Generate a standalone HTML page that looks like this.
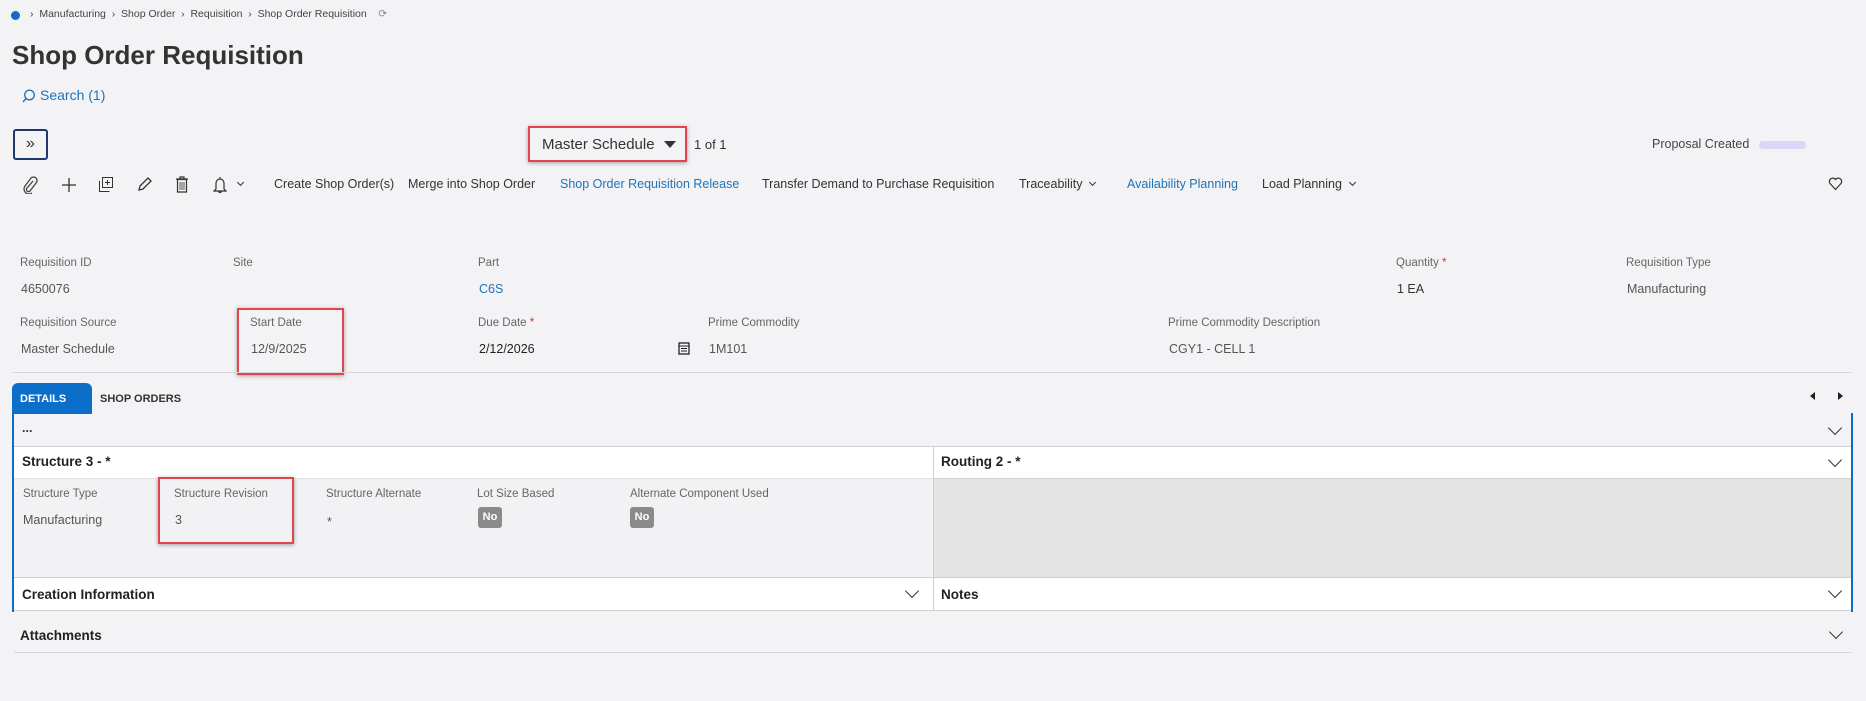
<!DOCTYPE html>
<html><head><meta charset="utf-8"><style>
*{margin:0;padding:0;box-sizing:border-box}
body{width:1866px;height:701px;background:#f3f2f5;font-family:"Liberation Sans",sans-serif;color:#333;position:relative;overflow:hidden;font-size:12.5px}
.a{position:absolute;white-space:nowrap}
.lbl{font-size:11.5px;color:#666}
.val{font-size:12.5px;color:#555}
.blue{color:#1e74b8}
.red{border:2px solid #e0474c;box-shadow:0 1px 4px rgba(0,0,0,.35)}
.chev{position:absolute;width:10px;height:10px;border-right:1.3px solid #333;border-bottom:1.3px solid #333;transform:rotate(45deg)}
.no{position:absolute;background:#8a8a8a;color:#fff;font-size:11px;font-weight:bold;border-radius:3px;width:24px;height:21px;line-height:21px;text-align:center}
svg{position:absolute}
</style></head><body>
<div class="a" style="left:11px;top:11px;width:9px;height:9px;border-radius:50%;background:#0b6fc9"></div>
<div class="a" style="left:30px;top:8px;font-size:10.5px;color:#444">›&nbsp;&nbsp;Manufacturing&nbsp;&nbsp;›&nbsp;&nbsp;Shop Order&nbsp;&nbsp;›&nbsp;&nbsp;Requisition&nbsp;&nbsp;›&nbsp;&nbsp;Shop Order Requisition&nbsp;&nbsp;&nbsp;&nbsp;<span style="color:#888">⟳</span></div>
<div class="a" style="left:12px;top:40px;font-size:26px;font-weight:bold;color:#333">Shop Order Requisition</div>
<svg style="left:22px;top:89px" width="14" height="14"><circle cx="7.5" cy="6" r="4.8" fill="none" stroke="#1e74b8" stroke-width="1.3"/><path d="M4 9.5L1 13" stroke="#1e74b8" stroke-width="1.4"/></svg>
<div class="a blue" style="left:40px;top:87px;font-size:14px">Search (1)</div>
<div class="a" style="left:13px;top:129px;width:35px;height:31px;border:2px solid #1b3a6b;border-radius:3px;text-align:center;line-height:26px;font-size:16px;color:#333">»</div>
<div class="a red" style="left:528px;top:126px;width:159px;height:36px"></div>
<div class="a" style="left:542px;top:136px;font-size:15px;color:#333">Master Schedule</div>
<div class="a" style="left:664px;top:141px;width:0;height:0;border-left:6px solid transparent;border-right:6px solid transparent;border-top:7px solid #333"></div>
<div class="a" style="left:694px;top:137px;font-size:13px;color:#333">1 of 1</div>
<div class="a" style="left:1652px;top:137px;font-size:12.5px;color:#444">Proposal Created</div>
<div class="a" style="left:1759px;top:141px;width:47px;height:8px;border-radius:4px;background:#d9d7f7"></div>
<svg style="left:22px;top:176px" width="16" height="18" viewBox="0 0 16 18"><path d="M11 5 L5 12 a2 2 0 0 0 3 3 L14 7 a3.5 3.5 0 0 0 -5 -5 L3 10 a5 5 0 0 0 7 7" fill="none" stroke="#444" stroke-width="1.3"/></svg>
<svg style="left:61px;top:177px" width="16" height="16"><path d="M8 1v14M1 8h14" stroke="#333" stroke-width="1.3"/></svg>
<svg style="left:98px;top:176px" width="16" height="17"><rect x="4.5" y="1.5" width="10" height="10" fill="none" stroke="#333"/><path d="M1.5 5v10.5h10M9.5 4v5M7 6.5h5" fill="none" stroke="#333"/></svg>
<svg style="left:137px;top:177px" width="15" height="15"><path d="M2 13l1-4 8-8 3 3-8 8z" fill="none" stroke="#333" stroke-width="1.3"/></svg>
<svg style="left:175px;top:176px" width="14" height="17"><path d="M1 3h12M5 3V1h4v2M2.5 3.5h9V16h-9z" fill="none" stroke="#333" stroke-width="1.2"/><path d="M5 6v8M7 6v8M9 6v8" stroke="#555"/></svg>
<svg style="left:213px;top:176px" width="14" height="18"><path d="M7 1v2M3 13V7a4 4 0 0 1 8 0v6l2 2H1z M5.5 15a1.5 1.5 0 0 0 3 0" fill="none" stroke="#333" stroke-width="1.2"/></svg>
<div class="chev" style="left:238px;top:180px;width:5px;height:5px;border-width:1px"></div>
<div class="a" style="left:274px;top:177px;color:#333">Create Shop Order(s)</div>
<div class="a" style="left:408px;top:177px;color:#333">Merge into Shop Order</div>
<div class="a blue" style="left:560px;top:177px">Shop Order Requisition Release</div>
<div class="a" style="left:762px;top:177px;color:#333">Transfer Demand to Purchase Requisition</div>
<div class="a" style="left:1019px;top:177px;color:#333">Traceability</div>
<div class="chev" style="left:1090px;top:180px;width:5px;height:5px;border-width:1px"></div>
<div class="a blue" style="left:1127px;top:177px">Availability Planning</div>
<div class="a" style="left:1262px;top:177px;color:#333">Load Planning</div>
<div class="chev" style="left:1350px;top:180px;width:5px;height:5px;border-width:1px"></div>
<svg style="left:1828px;top:176px" width="15" height="15"><path d="M7.5 13.5 L2 7.5 a3 3 0 0 1 5.5 -4 a3 3 0 0 1 5.5 4z" fill="none" stroke="#333" stroke-width="1.2"/></svg>
<div class="a lbl" style="left:20px;top:257px">Requisition ID</div>
<div class="a val" style="left:21px;top:282px">4650076</div>
<div class="a lbl" style="left:233px;top:257px">Site</div>
<div class="a lbl" style="left:478px;top:257px">Part</div>
<div class="a blue" style="left:479px;top:282px">C6S</div>
<div class="a lbl" style="left:1396px;top:257px">Quantity <span style="color:#d33">*</span></div>
<div class="a" style="left:1397px;top:282px;color:#333">1 EA</div>
<div class="a lbl" style="left:1626px;top:257px">Requisition Type</div>
<div class="a val" style="left:1627px;top:282px">Manufacturing</div>
<div class="a lbl" style="left:20px;top:317px">Requisition Source</div>
<div class="a val" style="left:21px;top:342px">Master Schedule</div>
<div class="a red" style="left:237px;top:308px;width:107px;height:67px"></div>
<div class="a lbl" style="left:250px;top:317px">Start Date</div>
<div class="a val" style="left:251px;top:342px">12/9/2025</div>
<div class="a lbl" style="left:478px;top:317px">Due Date <span style="color:#d33">*</span></div>
<div class="a" style="left:479px;top:342px;color:#222">2/12/2026</div>
<svg style="left:678px;top:341px" width="12" height="14"><rect x="1" y="2" width="10" height="11" fill="none" stroke="#222" stroke-width="1.3"/><path d="M1 5h10M3 7.5h6M3 10h6" stroke="#222"/></svg>
<div class="a lbl" style="left:708px;top:317px">Prime Commodity</div>
<div class="a val" style="left:709px;top:342px">1M101</div>
<div class="a lbl" style="left:1168px;top:317px">Prime Commodity Description</div>
<div class="a val" style="left:1169px;top:342px">CGY1 - CELL 1</div>
<div class="a" style="left:12px;top:372px;width:1840px;height:1px;background:#d6d5d8"></div>
<div class="a" style="left:12px;top:383px;width:80px;height:31px;background:#0b6fc9;border-radius:6px 6px 0 0;color:#fff;font-size:11px;font-weight:bold;padding:10px 0 0 8px">DETAILS</div>
<div class="a" style="left:100px;top:393px;font-size:11px;font-weight:bold;color:#333">SHOP ORDERS</div>
<div class="a" style="left:1810px;top:392px;width:0;height:0;border-top:4px solid transparent;border-bottom:4px solid transparent;border-right:5px solid #222"></div>
<div class="a" style="left:1838px;top:392px;width:0;height:0;border-top:4px solid transparent;border-bottom:4px solid transparent;border-left:5px solid #222"></div>
<div class="a" style="left:12px;top:413px;width:2px;height:199px;background:#0b6fc9"></div>
<div class="a" style="left:1851px;top:413px;width:2px;height:199px;background:#0b6fc9"></div>
<div class="a" style="left:22px;top:421px;font-weight:bold;color:#333">...</div>
<div class="chev" style="left:1830px;top:423px"></div>
<div class="a" style="left:14px;top:446px;width:1837px;height:1px;background:#cfcfd2"></div>
<div class="a" style="left:14px;top:447px;width:919px;height:31px;background:#fff"></div>
<div class="a" style="left:22px;top:454px;font-weight:bold;font-size:13.5px;color:#222">Structure 3 - *</div>
<div class="a" style="left:933px;top:447px;width:918px;height:31px;background:#fff;border-left:1px solid #cfcfd2"></div>
<div class="a" style="left:941px;top:454px;font-weight:bold;font-size:13.5px;color:#222">Routing 2 - *</div>
<div class="chev" style="left:1830px;top:455px"></div>
<div class="a" style="left:14px;top:478px;width:919px;height:100px;background:#f2f1f3;border-top:1px solid #e2e2e2"></div>
<div class="a" style="left:933px;top:478px;width:918px;height:100px;background:#e4e4e4;border-left:1px solid #cfcfd2;border-top:1px solid #d0d0d0"></div>
<div class="a lbl" style="left:23px;top:488px">Structure Type</div>
<div class="a val" style="left:23px;top:513px">Manufacturing</div>
<div class="a red" style="left:158px;top:477px;width:136px;height:67px"></div>
<div class="a lbl" style="left:174px;top:488px">Structure Revision</div>
<div class="a val" style="left:175px;top:513px">3</div>
<div class="a lbl" style="left:326px;top:488px">Structure Alternate</div>
<div class="a val" style="left:327px;top:515px">*</div>
<div class="a lbl" style="left:477px;top:488px">Lot Size Based</div>
<div class="no" style="left:478px;top:507px">No</div>
<div class="a lbl" style="left:630px;top:488px">Alternate Component Used</div>
<div class="no" style="left:630px;top:507px">No</div>
<div class="a" style="left:14px;top:577px;width:1837px;height:1px;background:#cfcfd2"></div>
<div class="a" style="left:14px;top:578px;width:919px;height:33px;background:#fff;border-bottom:1px solid #cfcfd2"></div>
<div class="a" style="left:22px;top:587px;font-weight:bold;font-size:13.5px;color:#222">Creation Information</div>
<div class="chev" style="left:907px;top:586px"></div>
<div class="a" style="left:933px;top:578px;width:918px;height:33px;background:#fff;border-left:1px solid #cfcfd2;border-bottom:1px solid #cfcfd2"></div>
<div class="a" style="left:941px;top:587px;font-weight:bold;font-size:13.5px;color:#222">Notes</div>
<div class="chev" style="left:1830px;top:586px"></div>
<div class="a" style="left:20px;top:628px;font-weight:bold;font-size:13.5px;color:#222">Attachments</div>
<div class="chev" style="left:1831px;top:627px"></div>
<div class="a" style="left:14px;top:652px;width:1838px;height:1px;background:#d6d5d8"></div>
</body></html>
